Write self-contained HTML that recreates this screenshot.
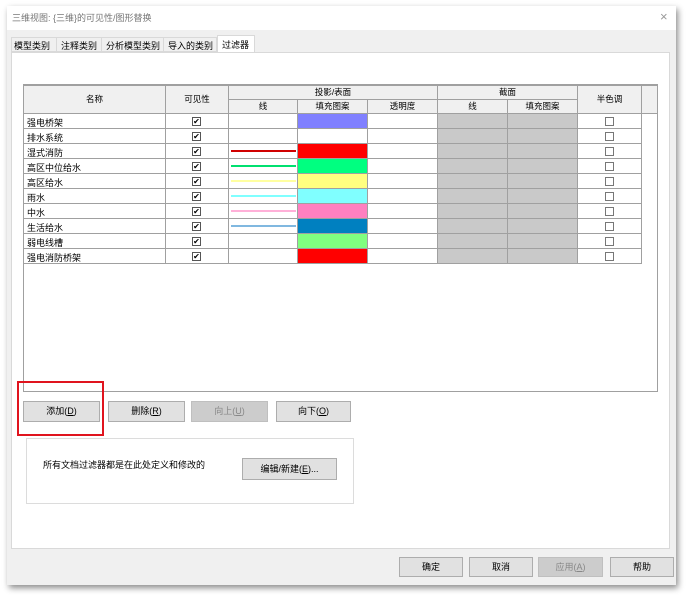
<!DOCTYPE html><html><head><meta charset="utf-8"><style>
*{margin:0;padding:0;box-sizing:border-box}
body{width:693px;height:595px;background:#fff;position:relative;overflow:hidden;font-family:"Liberation Sans","Noto Sans CJK SC",sans-serif;font-size:9px;color:#000}
.a{position:absolute}
.win{left:7px;top:6px;width:669px;height:579px;background:#f0f0f0;box-shadow:2px 3px 6px rgba(0,0,0,.45)}
.btn{position:absolute;background:#e1e1e1;border:1px solid #adadad;text-align:center;font-size:9px}
.cell{position:absolute;border-right:1px solid #a0a0a0;border-bottom:1px solid #a0a0a0}
.hd{background:#f0f0f0;text-align:center;font-size:8.5px}
.cb{position:absolute;width:9px;height:9px;border:1px solid #777;background:#fff}
.hat{background-color:#d4d4d4;background-image:radial-gradient(#a8a8a8 0.6px,transparent 0.7px);background-size:2px 2px}
</style></head><body>
<div class="a win"></div>
<div class="a" style="left:7px;top:6px;width:669px;height:24px;background:#fff"></div>
<div class="a" style="left:12px;top:11px;color:#777;font-size:9px">三维视图: {三维}的可见性/图形替换</div>
<div class="a" style="left:660px;top:9px;color:#999;font-size:13px">×</div>
<div class="a" style="left:11px;top:37px;width:206px;height:15px;border:1px solid #d9d9d9;background:#f0f0f0"></div>
<div class="a" style="left:14px;top:39px;font-size:9px;word-spacing:0">模型类别</div>
<div class="a" style="left:56px;top:37px;width:1px;height:15px;background:#d9d9d9"></div>
<div class="a" style="left:61px;top:39px">注释类别</div>
<div class="a" style="left:101px;top:37px;width:1px;height:15px;background:#d9d9d9"></div>
<div class="a" style="left:106px;top:39px">分析模型类别</div>
<div class="a" style="left:163px;top:37px;width:1px;height:15px;background:#d9d9d9"></div>
<div class="a" style="left:168px;top:39px">导入的类别</div>
<div class="a" style="left:217px;top:35px;width:38px;height:18px;background:#fff;border:1px solid #d9d9d9;border-bottom:none"></div>
<div class="a" style="left:222px;top:38px">过滤器</div>
<div class="a" style="left:11px;top:52px;width:659px;height:497px;background:#fff;border:1px solid #d9d9d9"></div>
<div class="a" style="left:23px;top:84px;width:635px;height:308px;border:1px solid #a0a0a0;border-top:2px solid #a0a0a0;background:#fff"></div>
<div id="t"></div>
<div class="btn" style="left:23px;top:401px;width:77px;height:21px;line-height:19px">添加(<u>D</u>)</div>
<div class="btn" style="left:108px;top:401px;width:77px;height:21px;line-height:19px">删除(<u>R</u>)</div>
<div class="btn" style="left:191px;top:401px;width:77px;height:21px;line-height:19px;background:#ccc;border-color:#bfbfbf;color:#888">向上(<u>U</u>)</div>
<div class="btn" style="left:276px;top:401px;width:75px;height:21px;line-height:19px">向下(<u>O</u>)</div>
<div class="a" style="left:17px;top:381px;width:87px;height:55px;border:2px solid #e0141e"></div>
<div class="a" style="left:26px;top:438px;width:328px;height:66px;border:1px solid #dcdcdc"></div>
<div class="a" style="left:43px;top:458px">所有文档过滤器都是在此处定义和修改的</div>
<div class="btn" style="left:242px;top:458px;width:95px;height:22px;line-height:20px">编辑/新建(<u>E</u>)...</div>
<div class="btn" style="left:399px;top:557px;width:64px;height:20px;line-height:18px">确定</div>
<div class="btn" style="left:469px;top:557px;width:64px;height:20px;line-height:18px">取消</div>
<div class="btn" style="left:538px;top:557px;width:65px;height:20px;line-height:18px;background:#ccc;border-color:#bfbfbf;color:#888">应用(<u>A</u>)</div>
<div class="btn" style="left:610px;top:557px;width:64px;height:20px;line-height:18px">帮助</div>
<script>
var h='';
function c(x,y,w,hh,cls,txt,st){h+='<div class="cell '+(cls||'')+'" style="left:'+x+'px;top:'+y+'px;width:'+w+'px;height:'+hh+'px;'+(st||'')+'">'+(txt||'')+'</div>';}
c(24,86,142,28,'hd','名称','line-height:27px');
c(166,86,63,28,'hd','可见性','line-height:27px');
c(229,86,209,14,'hd','投影/表面','line-height:13px');
c(438,86,140,14,'hd','截面','line-height:13px');
c(578,86,64,28,'hd','半色调','line-height:27px');
c(642,86,15,28,'hd','','border-right:none');
c(229,100,69,14,'hd','线','line-height:13px');
c(298,100,70,14,'hd','填充图案','line-height:13px');
c(368,100,70,14,'hd','透明度','line-height:13px');
c(438,100,70,14,'hd','线','line-height:13px');
c(508,100,70,14,'hd','填充图案','line-height:13px');
var names=['强电桥架','排水系统','湿式消防','高区中位给水','高区给水','雨水','中水','生活给水','弱电线槽','强电消防桥架'];
var fills=['#8080ff','#fff','#ff0000','#00ff80','#ffff80','#80ffff','#ff80c0','#0080c0','#80ff80','#ff0000'];
var lines=[null,null,'#d00000','#00e070','#ffffa0','#80ffff','#ffb0d8','#80b8e0',null,null];
for(var i=0;i<10;i++){var y=114+i*15;
c(24,y,142,15,'', '<span style="position:absolute;left:3px;top:2px">'+names[i]+'</span>');
c(166,y,63,15,'','<div class="cb" style="left:26px;top:3px;border-color:#555;font-size:8px;line-height:7px;text-align:center">✔</div>');
c(229,y,69,15,'',lines[i]?'<div style="position:absolute;left:2px;top:6px;width:65px;height:1.5px;background:'+lines[i]+'"></div>':'');
c(298,y,70,15,'','','background:'+fills[i]);
c(368,y,70,15);
c(438,y,70,15,'hat');
c(508,y,70,15,'hat');
c(578,y,64,15,'','<div class="cb" style="left:27px;top:3px"></div>');
}
document.getElementById('t').outerHTML=h;
</script>
</body></html>
